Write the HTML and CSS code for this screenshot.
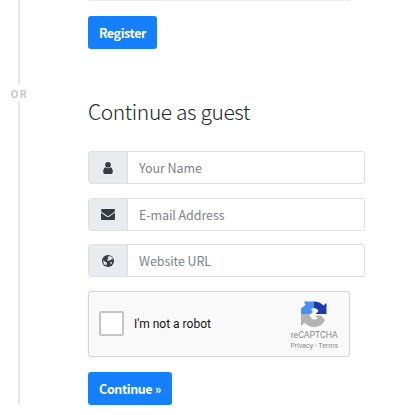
FILE: index.html
```
<!DOCTYPE html>
<html lang="en">
  <head>
    <meta charset="UTF-8" />
    <meta name="viewport" content="width=device-width, initial-scale=1.0" />
    <title>Continue as guest</title>
    <link rel="stylesheet" href="styles.css">
  </head>
  <body>
    <div class="page">
      <div class="divider"><span>OR</span></div>
      <main class="content">
        <div class="captcha-edge"></div>
        <button class="btn btn-register" type="button">Register</button>

        <h2>Continue as guest</h2>

        <form>
          <div class="input-group">
            <span class="addon">
              <svg viewBox="0 0 14 14">
                <circle cx="7" cy="3.8" r="2.8"/>
                <path d="M4.6 6.2C3 6.4 2.2 8.4 2.2 11 2.2 12.2 2.9 13 4 13H10C11.1 13 11.8 12.2 11.8 11 11.8 8.4 11 6.4 9.4 6.2 8.2 7.6 5.8 7.6 4.6 6.2z"/>
              </svg>
            </span>
            <input type="text" placeholder="Your Name">
          </div>
          <div class="input-group">
            <span class="addon">
              <svg viewBox="0 0 1792 1792"><path d="M1792 710v794q0 66-47 113t-113 47h-1472q-66 0-113-47t-47-113v-794q44 49 101 87 362 246 497 345 57 42 92.5 65.5t94.5 48 110 24.5h2q51 0 110-24.5t94.5-48 92.5-65.5q170-123 498-345 57-39 100-87zm0-294q0 79-49 151t-122 123q-376 261-468 325-10 7-42.5 31t-54 38.5-52 32.5-57.5 27-50 9h-2q-23 0-50-9t-57.5-27-52-32.5-54-38.5-42.5-31q-91-64-262-182.5t-205-142.5q-62-42-117-115.5t-55-136.5q0-78 41.5-130t118.5-52h1472q65 0 112.5 47t47.5 113z"/></svg>
            </span>
            <input type="text" placeholder="E-mail Address">
          </div>
          <div class="input-group">
            <span class="addon">
              <svg viewBox="0 0 14 14">
                <circle cx="7" cy="7" r="6"/>
                <path class="land" d="M7.6 2.2 9.6 2.2 11.4 3.8 11.8 5.6 10.4 5 9.4 6.4 8 6.2 6.8 7 6 6 7.4 4.8 6.6 3.8zM2.4 6.2 3.6 7.4 5.2 8 6 9.2 5.4 10.4 5.4 11.8 3.4 10.6 2.3 8.6zM9.2 8 10.8 8.2 11.2 9 9.8 10.6z"/>
              </svg>
            </span>
            <input type="text" placeholder="Website URL">
          </div>

          <div class="captcha">
            <span class="checkbox"></span>
            <span class="captcha-label">I'm not a robot</span>
            <div class="captcha-brand">
              <svg viewBox="0 0 28 28">
                <path fill="#4a90f0" d="M4 1.5H14V8C12.6 8 11.6 8.6 11 9.6L13 12 10.5 14H1V8.5L5.5 5z"/>
                <path fill="#1c3aa9" d="M14 1.5C18 1.5 21 3 23.4 5.5L26.5 3V14H15.5L18.5 11C17.4 9 16 8 14 8z"/>
                <path fill="#b3b3b3" d="M1 14H9.5C9.8 17.5 11.8 19.5 14.3 19.5 16.2 19.5 17.2 19 17.8 18L15.5 15.5H21L25 20C22.5 25 18.8 27 14 27 10 27 7 25.5 4.6 22.8L1 26z"/>
              </svg>
              <span class="brand-name">reCAPTCHA</span>
              <span class="brand-links">Privacy - Terms</span>
            </div>
          </div>

          <button class="btn btn-continue" type="button">Continue »</button>
        </form>
      </main>
    </div>
  </body>
</html>
```
FILE: styles.css
```
* {
  box-sizing: border-box;
}
body {
  margin: 0;
  background: #fff;
  font-family: "Noto Sans CJK SC", "Noto Sans", sans-serif;
  overflow: hidden;
}
.page {
  display: flex;
  height: 415px;
}
.divider {
  display: flex;
  flex-direction: column;
  align-items: center;
  width: 38px;
  height: 404px;
  color: #c8c8c8;
  font-size: 10.5px;
  font-weight: 700;
  line-height: 17px;
  letter-spacing: 0.8px;
}
.divider::before,
.divider::after {
  content: "";
  width: 2px;
  background: #e6e6e6;
}
.divider::before {
  height: 85px;
}
.divider::after {
  flex: 1;
}
.content {
  width: 277px;
  margin-left: 50px;
}
.captcha-edge {
  width: 262px;
  height: 1px;
  background: #ededed;
}
.btn {
  display: block;
  height: 33px;
  padding: 0;
  border: 0;
  border-radius: 3px;
  background: #167ffc;
  color: #fff;
  font-family: inherit;
  font-size: 12.5px;
  font-weight: 700;
  line-height: 33px;
  letter-spacing: -0.4px;
}
.btn-register {
  width: 69px;
  margin-top: 15px;
}
.btn-continue {
  width: 84px;
}
h2 {
  margin: 46px 0 24px;
  color: #212529;
  font-size: 21px;
  font-weight: 300;
  line-height: 32px;
  letter-spacing: -0.4px;
}
.input-group {
  display: flex;
  height: 33px;
  margin-bottom: 13.5px;
  border: 1px solid #dedfe0;
  border-radius: 3px;
  overflow: hidden;
}
.addon {
  display: flex;
  align-items: center;
  justify-content: center;
  width: 39px;
  border-right: 1px solid #dedfe0;
  background: #e9ecef;
}
.addon svg {
  width: 14px;
  height: 14px;
  fill: #343c44;
}
.addon .land {
  fill: #e9ecef;
}
input {
  flex: 1;
  min-width: 0;
  padding: 0 11px;
  border: 0;
  font-family: inherit;
  font-size: 12.5px;
  letter-spacing: -0.08px;
}
input::placeholder {
  color: #7b838a;
}
.captcha {
  display: flex;
  align-items: center;
  width: 262px;
  height: 66px;
  margin-bottom: 15px;
  padding: 0 11px 0 10px;
  border: 1px solid #d6d6d6;
  border-radius: 3px;
  background: #f9f9f9;
  box-shadow: 0 0 2px rgba(0, 0, 0, 0.08);
  font-family: Roboto, sans-serif;
}
.checkbox {
  width: 25px;
  height: 25px;
  border: 2px solid #c5c5c5;
  border-radius: 2px;
  background: #fff;
}
.captcha-label {
  margin-left: 10px;
  color: #111;
  font-size: 12px;
}
.captcha-brand {
  display: flex;
  flex-direction: column;
  align-items: center;
  margin-left: auto;
  padding-top: 3px;
  color: #8a8a8a;
}
.captcha-brand svg {
  width: 28px;
  height: 28px;
}
.brand-name {
  font-size: 8.7px;
  line-height: 14px;
}
.brand-links {
  font-size: 7px;
  line-height: 9px;
}
```
